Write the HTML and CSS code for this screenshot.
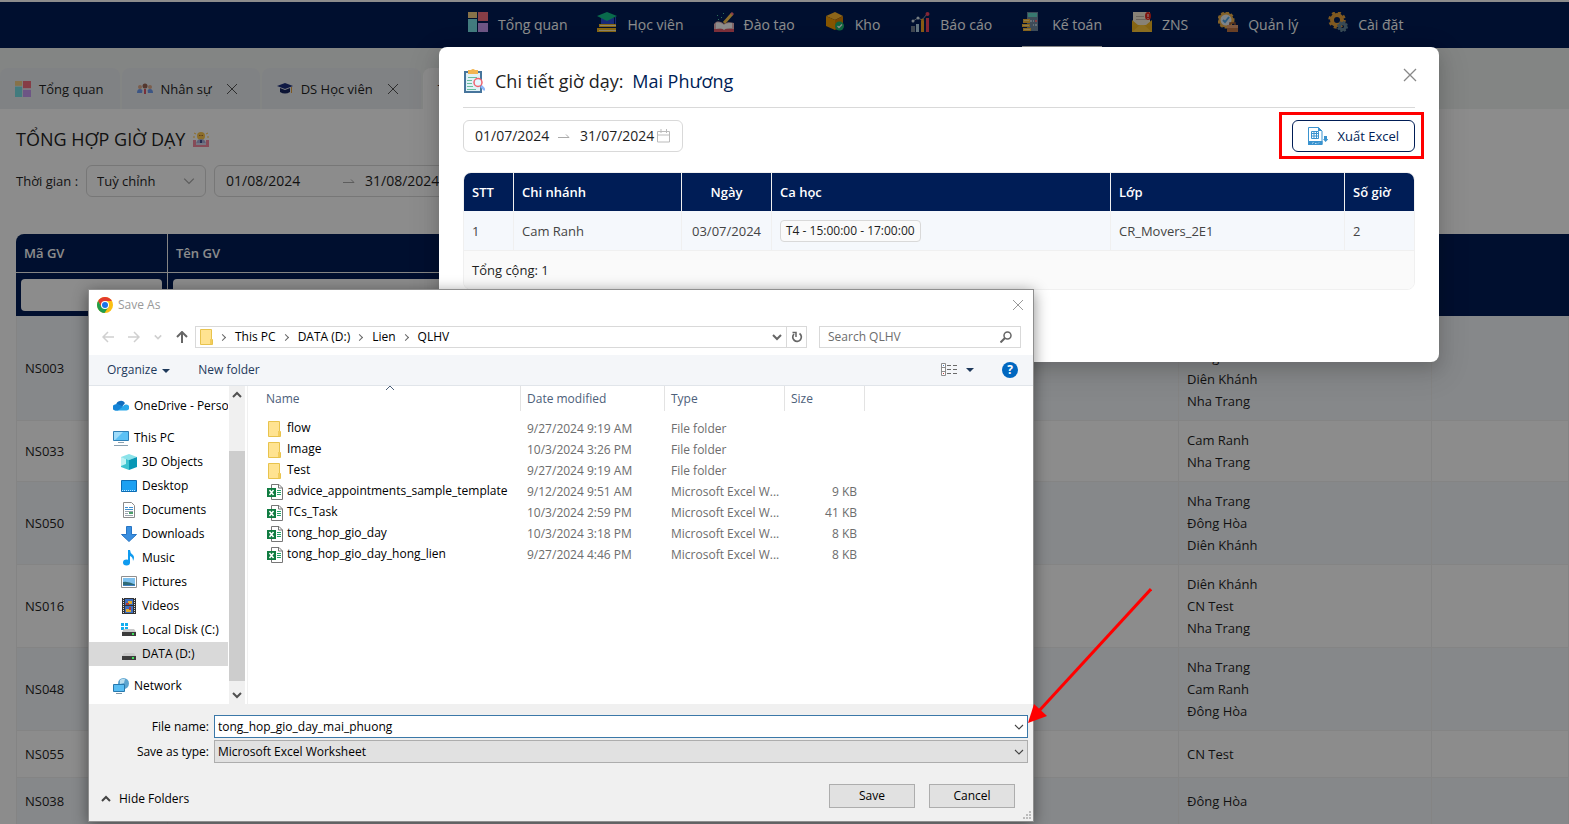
FILE: index.html
```html
<!DOCTYPE html>
<html lang="vi">
<head>
    <meta charset="UTF-8">
    <meta name="viewport" content="width=device-width, initial-scale=1.0">
    <title>Tổng hợp giờ dạy</title>
    <link rel="stylesheet" href="styles.css">
</head>
<body>
    <!-- Shared icons -->
    <svg class="sprite" aria-hidden="true">
        <symbol id="icon-grid" viewBox="0 0 20 20">
            <path fill="#f6cf86" d="M0 0h9v6H0z"/>
            <path fill="#f56f80" d="M10 0h10v9H10z"/>
            <path fill="#78e0e6" d="M0 7h9v13H0z"/>
            <path fill="#c79cf2" d="M10 11h10v9H10z"/>
        </symbol>
        <symbol id="icon-close" viewBox="0 0 12 12">
            <path d="M1 1l10 10M11 1L1 11" fill="none" stroke="currentColor"/>
        </symbol>
        <symbol id="icon-down" viewBox="0 0 10 10">
            <path d="M1 3l4 4 4-4" fill="none" stroke="currentColor" stroke-width="1.1"/>
        </symbol>
        <symbol id="icon-swap" viewBox="0 0 12 12">
            <path d="M0 7.5h11L8 4.5" fill="none" stroke="currentColor"/>
        </symbol>
        <symbol id="icon-folder" viewBox="0 0 16 16">
            <path fill="#ffe391" stroke="#e8c34d" d="M1.5.5h11v10h1v5H1.5z"/>
            <path fill="#f3cd5c" d="M11 10h2v5h-2z"/>
        </symbol>
        <symbol id="icon-excel" viewBox="0 0 16 16">
            <path fill="#fff" stroke="#777" d="M4.500.5h7.500l3.500 3.500v11.500H4.500z"/>
            <path fill="none" stroke="#777" d="M11.500.5V4h4"/>
            <path stroke="#21a366" d="M10 6.500h4M10 8.500h4M10 10.500h4"/>
            <path fill="#107c41" d="M0 4h9v9H0z"/>
            <path stroke="#fff" stroke-width="1.500" d="M2.500 6l4 5M6.500 6l-4 5"/>
        </symbol>
    </svg>

    <div class="app">
        <nav class="main-nav">
            <a href="#"><svg class="nav-icon"><use href="#icon-grid"/></svg>Tổng quan</a>
            <a href="#"><svg class="nav-icon" viewBox="0 0 20 20"><path fill="#2b4bd8" d="M4 6h13v6H4z"/><path fill="#12c48b" d="M0 4l10-4 10 4-10 5z"/><path stroke="#2b4bd8" d="M18.500 5v7"/><path fill="#f5b921" d="M2 12h17v3H2zM0 16h19v4H0z"/><path stroke="#fff0c0" d="M3 13.500h16M2 18.500h17"/></svg>Học viên</a>
            <a href="#"><svg class="nav-icon" viewBox="0 0 20 20"><path fill="#e9b7bb" d="M0 12l2-2c3-1 6 0 8 2 3-2 6-2 10-1v7H0z"/><path fill="#e4586b" d="M0 17h20v3H0z"/><path fill="#fff" d="M2 11c3-1 6 0 8 2 2-2 5-2 8-2v5c-3 0-6 0-8 2-2-2-5-2-8-1z"/><path stroke="#ffc850" stroke-width="3" d="M10 11l8-9"/><path stroke="#ff7784" stroke-width="3" d="M17.500 2.500L19 1"/><path fill="#50c8a0" d="M3 3h1v1H3zM7 5h1v1H7zM9 1h1v1H9zM4 7h1v1H4z"/></svg>Đào tạo</a>
            <a href="#"><svg class="nav-icon" viewBox="0 0 20 20"><path fill="#ffb82e" d="M1 4l9-4 8 4-8 4z"/><path fill="#f29c00" d="M1 4l9 4v10l-9-4z"/><path fill="#d98200" d="M10 8l8-4v10l-8 4z"/><circle cx="14.500" cy="14" r="4.500" fill="#1eb872"/><path fill="none" stroke="#fff" stroke-width="1.300" d="M12.500 14l1.500 1.500 3-3"/></svg>Kho</a>
            <a href="#"><svg class="nav-icon" viewBox="0 0 20 20"><path fill="#758194" d="M1 14h4v6H1z"/><path fill="#b5d4e8" d="M6 12h3v8H6z"/><path fill="#f6a623" d="M11 9h3v11h-3z"/><path fill="#f04461" d="M16 6h3v14h-3z"/><path fill="none" stroke="#8b98a8" d="M3 9l5-3 4 2 5-6"/><g fill="#d9e5ef"><circle cx="3" cy="9" r="1.500"/><circle cx="8" cy="6" r="1.500"/></g><circle cx="12.500" cy="8" r="1.500" fill="#f6a623"/><circle cx="17.500" cy="2" r="2" fill="#f04461"/></svg>Báo cáo</a>
            <a href="#" class="active"><svg class="nav-icon" viewBox="0 0 20 20"><path fill="#718aa3" d="M5 0h11v19H5z"/><path fill="#67dccc" d="M6 1h9v4H6z"/><path fill="#b7cddd" d="M8 8h2v2H8zM11 8h1v2h-1zM11 12h1v2h-1zM13 12h2v2h-2z"/><path fill="#ff7078" d="M13 8h2v2h-2z"/><path fill="#f8b635" d="M1 7h7v4H1zM0 12h8v3H0zM1 16h8v3H1z"/><path stroke="#ffe08a" d="M2 8.500h5M1 13.500h6M2 17.500h6"/></svg>Kế toán</a>
            <a href="#"><svg class="nav-icon" viewBox="0 0 20 20"><path fill="#f7edd8" d="M1 0h17v14H1z"/><path stroke="#c1b7a6" d="M4 4.500h8M4 7.500h10"/><path fill="#f5b824" d="M0 8l6 5h8l6-5v12H0z"/><path fill="#ffc93c" d="M0 20l8-7h4l8 7z"/><ellipse cx="16" cy="4" rx="3" ry="4" fill="#e8261c"/><path stroke="#fff" d="M16 2v3M16 6v1"/></svg>ZNS</a>
            <a href="#"><svg class="nav-icon" viewBox="0 0 20 20"><circle cx="8" cy="8" r="6.500" fill="#e6eef7" stroke="#efb149" stroke-width="2"/><circle cx="8" cy="8" r="7.500" fill="none" stroke="#efb149" stroke-width="2" stroke-dasharray="3 2"/><path fill="none" stroke="#4ba4ea" stroke-width="2" d="M5 8l2 2 4-5"/><path fill="#bf7546" d="M9 13h11v7H9z"/><path fill="none" stroke="#9a5a35" stroke-width="1.500" d="M12 13v-2h5v2"/><path fill="#e6a177" d="M9 13h11v3H9z"/></svg>Quản lý</a>
            <a href="#"><svg class="nav-icon" viewBox="0 0 20 20"><circle cx="9" cy="8" r="5" fill="none" stroke="#e9a33b" stroke-width="4"/><circle cx="9" cy="8" r="7.500" fill="none" stroke="#e9a33b" stroke-width="2.500" stroke-dasharray="3 3"/><circle cx="14.500" cy="14.500" r="3" fill="none" stroke="#66879b" stroke-width="3"/><circle cx="14.500" cy="14.500" r="4.500" fill="none" stroke="#66879b" stroke-width="2" stroke-dasharray="2 1.500"/></svg>Cài đặt</a>
        </nav>

        <div class="tabs">
            <div class="tab"><svg class="tab-icon"><use href="#icon-grid"/></svg><a href="#">Tổng quan</a></div>
            <div class="tab"><svg class="tab-icon" viewBox="0 0 16 16"><circle cx="3" cy="6" r="2" fill="#e0ab8c"/><circle cx="13" cy="6" r="2" fill="#e0ab8c"/><path fill="#6d9cf0" d="M0 12q0-4 3-4t3 4zM10 12q0-4 3-4t3 4z"/><circle cx="8" cy="5" r="2.500" fill="#9a6555"/><path fill="#e8edf5" d="M5 13q0-5 3-5t3 5z"/><path stroke="#d9263a" stroke-width="1.500" d="M8 8v5"/></svg><a href="#">Nhân sự</a><button class="tab-close" aria-label="Đóng Nhân sự"><svg><use href="#icon-close"/></svg></button></div>
            <div class="tab"><svg class="tab-icon" viewBox="0 0 16 16"><path fill="#1c2f7c" d="M0 5l8-3 8 3-8 3z"/><path fill="#16255f" d="M3 7l5 2 5-2v4q-5 3-10 0z"/><path stroke="#e8a13a" d="M14.500 6v6"/></svg><a href="#">DS Học viên</a><button class="tab-close" aria-label="Đóng DS Học viên"><svg><use href="#icon-close"/></svg></button></div>
            <div class="tab current"><a href="#">Tổng hợp giờ dạy</a></div>
        </div>

        <main class="content">
            <h1>TỔNG HỢP GIỜ DẠY
                <svg class="title-icon" viewBox="0 0 16 16"><circle cx="8" cy="5" r="4" fill="#ffc94d"/><path stroke="#ffc94d" d="M1 2l2 1M15 2l-2 1M0 6h2M14 6h2"/><path stroke="#a86b32" d="M6 4.500h1.500M8.500 4.500h1.500"/><path fill="#a9b1dc" d="M3 14q0-6 5-6t5 6z"/><path fill="#f58ba0" d="M0 9h3v5h10V9h3v7H0z"/><path fill="#d5d9ee" d="M3 12h10v2H3z"/><path fill="#44508f" d="M7 9h2v3H7z"/></svg>
            </h1>
            <div class="filters">
                <label for="period">Thời gian :</label>
                <span class="select-box">
                    <select id="period"><option>Tuỳ chỉnh</option></select>
                    <svg class="select-arrow"><use href="#icon-down"/></svg>
                </span>
                <span class="range range-wide">
                    <input type="text" value="01/08/2024" aria-label="Từ ngày">
                    <svg class="range-arrow"><use href="#icon-swap"/></svg>
                    <input type="text" value="31/08/2024" aria-label="Đến ngày">
                </span>
            </div>

            <table class="teachers">
                <colgroup><col class="col-code"><col><col class="col-branch"><col class="col-last"></colgroup>
                <thead>
                    <tr><th>Mã GV</th><th>Tên GV</th><th></th><th></th></tr>
                    <tr class="search-row">
                        <td><input type="text" aria-label="Tìm mã GV"></td>
                        <td><input type="text" aria-label="Tìm tên GV"></td>
                        <td></td>
                        <td></td>
                    </tr>
                </thead>
                <tbody>
                    <tr><td>NS003</td><td></td><td>Cam Ranh<br>Đông Hòa<br>Diên Khánh<br>Nha Trang</td><td></td></tr>
                    <tr><td>NS033</td><td></td><td>Cam Ranh<br>Nha Trang</td><td></td></tr>
                    <tr><td>NS050</td><td></td><td>Nha Trang<br>Đông Hòa<br>Diên Khánh</td><td></td></tr>
                    <tr><td>NS016</td><td></td><td>Diên Khánh<br>CN Test<br>Nha Trang</td><td></td></tr>
                    <tr><td>NS048</td><td></td><td>Nha Trang<br>Cam Ranh<br>Đông Hòa</td><td></td></tr>
                    <tr><td>NS055</td><td></td><td>CN Test</td><td></td></tr>
                    <tr><td>NS038</td><td></td><td>Đông Hòa</td><td></td></tr>
                </tbody>
            </table>
        </main>
    </div>

    <div class="mask"></div>

    <!-- Teaching hours detail -->
    <section class="modal" role="dialog" aria-labelledby="modalTitle">
        <header class="modal-header">
            <svg class="modal-icon" viewBox="0 0 22 24"><path fill="#dff1f7" stroke="#47759c" stroke-width="2" d="M2 3h16v20H2z"/><path fill="#f2b450" d="M5 1h3q2-2 4 0h3v4H5z"/><path stroke="#69bd9b" d="M5 8.500h9M4 11.500h5M4 14.500h5M4 17.500h6M4 20.500h9"/><circle cx="15" cy="13.500" r="4" fill="#e7f6ff" stroke="#f0616d" stroke-width="1.500"/><path stroke="#8bb5f8" stroke-width="2.500" d="M18 17l4 4"/></svg>
            <h2 id="modalTitle">Chi tiết giờ dạy: <span>Mai Phương</span></h2>
            <button class="modal-close" aria-label="Đóng"><svg viewBox="0 0 14 14"><path d="M1 1l12 12M13 1L1 13" fill="none" stroke="currentColor" stroke-width="1.300"/></svg></button>
        </header>
        <div class="modal-tools">
            <span class="range">
                <input type="text" value="01/07/2024" aria-label="Từ ngày">
                <svg class="range-arrow"><use href="#icon-swap"/></svg>
                <input type="text" value="31/07/2024" aria-label="Đến ngày">
                <svg class="calendar" viewBox="0 0 14 14"><path fill="none" stroke="currentColor" d="M.5 2.500h12v10.500H.5zM.5 6h12M4 0v4M9.500 0v4"/></svg>
            </span>
            <div class="export-mark">
                <button class="export">
                    <svg viewBox="0 0 20 20"><path fill="#fff" stroke="#3a93cf" d="M.5 1.500h10l3.500 3.500v13H.5z"/><path fill="#3a93cf" d="M10 1l4 4h-4zM0 15h14.500v4H0z"/><path fill="none" stroke="#3a93cf" d="M3.500 5.500h7v7h-7zM3.500 7.500h7M3.500 10h7M6 5.500v7M8.500 5.500v7"/><path stroke="#b9dcf2" d="M4 17.500l1.500-1M7 17.500h1.500M10 17.500l1-1"/><path fill="#3a93cf" d="M16 10h3v3h1.500l-3 3-2.500-3h1z"/></svg>
                    Xuất Excel
                </button>
            </div>
        </div>
        <div class="detail-box">
            <table class="detail">
                <colgroup><col class="col-stt"><col class="col-place"><col class="col-date"><col><col class="col-class"><col class="col-hours"></colgroup>
                <thead>
                    <tr><th>STT</th><th>Chi nhánh</th><th class="center">Ngày</th><th>Ca học</th><th>Lớp</th><th>Số giờ</th></tr>
                </thead>
                <tbody>
                    <tr><td>1</td><td>Cam Ranh</td><td class="center">03/07/2024</td><td><span class="tag">T4 - 15:00:00 - 17:00:00</span></td><td>CR_Movers_2E1</td><td>2</td></tr>
                </tbody>
            </table>
            <div class="total">Tổng cộng: 1</div>
        </div>
    </section>

    <!-- Save As window -->
    <section class="save-window" role="dialog" aria-label="Save As" lang="en">
        <header class="window-title">
            <svg class="icon16" viewBox="0 0 16 16"><circle cx="8" cy="8" r="8" fill="#fbbf12"/><path fill="#e33b2e" d="M1.100 4A8 8 0 0 1 14.900 4H8L4.500 10z"/><path fill="#1f9d4d" d="M1.100 4A8 8 0 0 0 7.500 16l4-6H4.500z"/><circle cx="8" cy="8" r="4" fill="#fff"/><circle cx="8" cy="8" r="3" fill="#1a73e8"/></svg>
            <span>Save As</span>
            <button aria-label="Close"><svg class="icon12"><use href="#icon-close"/></svg></button>
        </header>

        <div class="address-row">
            <div class="arrows">
                <button class="faded" aria-label="Back"><svg class="icon12" viewBox="0 0 12 12"><path d="M12 6H1M6 1L1 6l5 5" fill="none" stroke="currentColor" stroke-width="1.500"/></svg></button>
                <button class="faded" aria-label="Forward"><svg class="icon12" viewBox="0 0 12 12"><path d="M0 6h11M6 1l5 5-5 5" fill="none" stroke="currentColor" stroke-width="1.500"/></svg></button>
                <button class="faded" aria-label="Recent locations"><svg class="icon8" viewBox="0 0 10 10"><path d="M1 3l4 4 4-4" fill="none" stroke="currentColor" stroke-width="2"/></svg></button>
                <button aria-label="Up"><svg class="icon12" viewBox="0 0 12 12"><path d="M6 12V1M1 6l5-5 5 5" fill="none" stroke="currentColor" stroke-width="2"/></svg></button>
            </div>
            <div class="address">
                <svg class="icon16"><use href="#icon-folder"/></svg>
                <span class="sep"></span><a href="#">This PC</a>
                <span class="sep"></span><a href="#">DATA (D:)</a>
                <span class="sep"></span><a href="#">Lien</a>
                <span class="sep"></span><a href="#">QLHV</a>
                <button class="address-drop" aria-label="Previous locations"><svg class="icon10" viewBox="0 0 10 10"><path d="M1 3l4 4 4-4" fill="none" stroke="currentColor" stroke-width="2"/></svg></button>
                <button class="refresh" aria-label="Refresh"><svg class="icon12" viewBox="0 0 12 12"><path d="M8.500 2.500a4.300 4.300 0 1 1-5.500.5" fill="none" stroke="currentColor" stroke-width="1.700"/><path fill="none" stroke="currentColor" stroke-width="1.500" d="M1.500 1.500H5V6"/></svg></button>
            </div>
            <div class="search">
                <input type="text" placeholder="Search QLHV" aria-label="Search QLHV">
                <svg class="icon12" viewBox="0 0 12 12"><circle cx="7.500" cy="4.500" r="3.500" fill="none" stroke="currentColor" stroke-width="1.500"/><path d="M5 7l-4.500 4.500" stroke="currentColor" stroke-width="2"/></svg>
            </div>
        </div>

        <div class="toolbar">
            <button>Organize <i class="caret"></i></button>
            <button>New folder</button>
            <button class="view" aria-label="Change your view">
                <svg class="icon16" viewBox="0 0 16 14"><path fill="#fff" stroke="#8c8c8c" d="M.5.5h4v12h-4zM.5 4.500h4M.5 8.500h4"/><path stroke="#6a6a6a" stroke-dasharray="4 2" d="M6 2.500h10M6 6.500h10M6 10.500h10"/><path fill="#4a7dc0" d="M2 2h1v1H2z"/><path fill="#c04040" d="M2 10h1v1H2z"/></svg>
                <i class="caret"></i>
            </button>
            <button class="help" aria-label="Help">?</button>
        </div>

        <div class="explorer">
            <div class="tree">
                <ul>
                    <li><a href="#"><svg class="icon16" viewBox="0 0 16 16"><path fill="#0f6cbd" d="M3 7a5 5 0 0 1 9-2l-4 5z"/><path fill="#28a8ea" d="M2.500 12.500a3 3 0 0 1 .5-6q2-.5 4 1l3 1a3 3 0 0 1 3-2 3 3 0 0 1 .5 6z"/><path fill="#1484d7" d="M2.500 12.500a3 3 0 0 1 .5-6q2-.5 4 1l3 1-5 4z"/></svg>OneDrive - Person</a></li>
                    <li class="root"><a href="#"><svg class="icon16" viewBox="0 0 16 16"><path fill="#5cc1f5" stroke="#2f7fb5" d="M.5 1.500h15v9H.5z"/><path fill="#9edcfb" d="M1 2h9l-8 8H1z"/><path stroke="#8aa0b0" d="M5 12.500h6M1 15.500h14"/></svg>This PC</a>
                        <ul>
                            <li><a href="#"><svg class="icon16" viewBox="0 0 16 16"><path fill="#8be3ea" d="M0 3l8-3 8 3-8 3z"/><path fill="#3cc3d0" d="M0 3l8 3v10l-8-3z"/><path fill="#0897b5" d="M16 3L8 6v10l8-3z"/><path fill="#bdf3f5" d="M0 3l5 2v5l-5 2z"/></svg>3D Objects</a></li>
                            <li><a href="#"><svg class="icon16" viewBox="0 0 16 16"><path fill="#1ba0f2" stroke="#0c6cb3" d="M.5 2.500h15v11H.5z"/><path stroke="#bfe5ff" stroke-dasharray="1 1" d="M1 12.500h14"/></svg>Desktop</a></li>
                            <li><a href="#"><svg class="icon16" viewBox="0 0 16 16"><path fill="#fff" stroke="#8a8a8a" d="M2.500.5h8l3 3v12h-11z"/><path stroke="#3f8fd0" d="M4 5.500h3M8 5.500h4M4 7.500h8"/><path stroke="#9aa4ae" d="M4 9.500h8M4 11.500h3M4 13.500h8"/><path fill="#4ca06a" d="M8 10h4v2H8z"/></svg>Documents</a></li>
                            <li><a href="#"><svg class="icon16" viewBox="0 0 16 16"><path fill="#3a8fe0" stroke="#2775c4" d="M5.500.5h5v8h5L8 15.500.5 8.500h5z"/></svg>Downloads</a></li>
                            <li><a href="#"><svg class="icon16" viewBox="0 0 16 16"><ellipse cx="5.500" cy="12.500" rx="3.500" ry="3" fill="#0f9bf0"/><path fill="#0f9bf0" d="M7 0h2q0 3 3 5 2 2 0 6 0-4-3-5v7H7z"/></svg>Music</a></li>
                            <li><a href="#"><svg class="icon16" viewBox="0 0 16 16"><path fill="#fff" stroke="#8f8f8f" d="M.5 2.500h15v11H.5z"/><path fill="#7fc1ee" d="M2 4h12v8H2z"/><path fill="#2f6a77" d="M2 8q5-1 12 2.500v1H2z"/><path fill="#3f7fc0" d="M2 11h12v1H2z"/></svg>Pictures</a></li>
                            <li><a href="#"><svg class="icon16" viewBox="0 0 16 16"><path fill="#333" d="M1 0h14v16H1z"/><path stroke="#ddd" stroke-dasharray="1 1" d="M2.500 0v16M13.500 0v16"/><path fill="#3e6fc2" d="M4 1h8v6H4zM4 8h8v7H4z"/><path fill="#e0a92c" d="M7 3h4v3H7zM5 11h5v3H5z"/><path fill="#b23a30" d="M5 5h3v2H5zM8 9h2v3H8z"/></svg>Videos</a></li>
                            <li><a href="#"><svg class="icon16" viewBox="0 0 16 16"><path fill="#12aef0" d="M0 1h3v3H0zM4 1h3v3H4zM0 5h3v3H0zM4 5h3v3H4z"/><path fill="#c9c9c9" d="M3 7h10l2 3H1z"/><path fill="#3c3c3c" d="M1 10h14v4H1z"/><path fill="#3fe05a" d="M11 11h2v2h-2z"/></svg>Local Disk (C:)</a></li>
                            <li class="selected"><a href="#"><svg class="icon16" viewBox="0 0 16 16"><path fill="#c9c9c9" d="M3 7h10l2 3H1z"/><path fill="#3c3c3c" d="M1 10h14v4H1z"/><path fill="#3fe05a" d="M11 11h2v2h-2z"/></svg>DATA (D:)</a></li>
                        </ul>
                    </li>
                    <li class="root"><a href="#"><svg class="icon16" viewBox="0 0 16 16"><circle cx="10.500" cy="5.500" r="5.500" fill="#5ba3cf"/><path fill="#b9dced" d="M7 2q3-2 5-1l-1 4-4 1z"/><path fill="#58bdf3" stroke="#2878ad" d="M.5 6.500h11v7H.5z"/><path stroke="#7f98a8" d="M3 15.500h6"/></svg>Network</a></li>
                </ul>
            </div>
            <div class="scrollbar">
                <svg class="icon10" viewBox="0 0 10 10"><path d="M1 7l4-4 4 4" fill="none" stroke="currentColor" stroke-width="2"/></svg>
                <span class="thumb"></span>
                <svg class="icon10" viewBox="0 0 10 10"><path d="M1 3l4 4 4-4" fill="none" stroke="currentColor" stroke-width="2"/></svg>
            </div>
            <div class="files-pane">
                <table class="files">
                    <colgroup><col class="col-name"><col class="col-modified"><col class="col-type"><col class="col-size"><col></colgroup>
                    <thead>
                        <tr><th>Name<svg class="sort icon10" viewBox="0 0 10 10"><path d="M1 7l4-4 4 4" fill="none" stroke="currentColor"/></svg></th><th>Date modified</th><th>Type</th><th>Size</th><th></th></tr>
                    </thead>
                    <tbody>
                        <tr><td><svg class="icon16"><use href="#icon-folder"/></svg>flow</td><td>9/27/2024 9:19 AM</td><td>File folder</td><td></td><td></td></tr>
                        <tr><td><svg class="icon16"><use href="#icon-folder"/></svg>Image</td><td>10/3/2024 3:26 PM</td><td>File folder</td><td></td><td></td></tr>
                        <tr><td><svg class="icon16"><use href="#icon-folder"/></svg>Test</td><td>9/27/2024 9:19 AM</td><td>File folder</td><td></td><td></td></tr>
                        <tr><td><svg class="icon16"><use href="#icon-excel"/></svg>advice_appointments_sample_template</td><td>9/12/2024 9:51 AM</td><td>Microsoft Excel W...</td><td>9 KB</td><td></td></tr>
                        <tr><td><svg class="icon16"><use href="#icon-excel"/></svg>TCs_Task</td><td>10/3/2024 2:59 PM</td><td>Microsoft Excel W...</td><td>41 KB</td><td></td></tr>
                        <tr><td><svg class="icon16"><use href="#icon-excel"/></svg>tong_hop_gio_day</td><td>10/3/2024 3:18 PM</td><td>Microsoft Excel W...</td><td>8 KB</td><td></td></tr>
                        <tr><td><svg class="icon16"><use href="#icon-excel"/></svg>tong_hop_gio_day_hong_lien</td><td>9/27/2024 4:46 PM</td><td>Microsoft Excel W...</td><td>8 KB</td><td></td></tr>
                    </tbody>
                </table>
            </div>
        </div>

        <form class="save-form">
            <div class="fields">
                <label for="fileName">File name:</label>
                <span class="field"><input type="text" id="fileName" value="tong_hop_gio_day_mai_phuong"><svg class="icon10"><use href="#icon-down"/></svg></span>
                <label for="fileType">Save as type:</label>
                <span class="field"><select id="fileType"><option>Microsoft Excel Worksheet</option></select><svg class="icon10"><use href="#icon-down"/></svg></span>
            </div>
            <div class="actions">
                <button type="button" class="hide-folders"><svg class="icon10" viewBox="0 0 10 10"><path d="M1 7l4-4 4 4" fill="none" stroke="#444" stroke-width="2"/></svg>Hide Folders</button>
                <button type="button" class="win-button">Save</button>
                <button type="button" class="win-button">Cancel</button>
            </div>
            <svg class="grip" viewBox="0 0 8 8"><path fill="#bcbcbc" d="M6 0h2v2H6zM3 3h2v2H3zM6 3h2v2H6zM0 6h2v2H0zM3 6h2v2H3zM6 6h2v2H6z"/></svg>
        </form>
    </section>

    <svg class="pointer" viewBox="0 0 124 136" aria-hidden="true">
        <path stroke="#f00" stroke-width="3" d="M123 1L10 124"/>
        <path fill="#f00" d="M0 135l6-19 13 12z"/>
    </svg>
</body>
</html>
```

FILE: styles.css
```css
* {
    box-sizing: border-box;
}
body {
    position: relative;
    min-height: 100vh;
    margin: 0;
    overflow-x: hidden;
    background: #fff;
    color: #1f1f1f;
    font-family: "Open Sans", "Noto Sans", sans-serif;
    font-size: 13px;
    line-height: 22px;
}
a {
    color: inherit;
    text-decoration: none;
}
button, input, select {
    margin: 0;
    padding: 0;
    border: none;
    background: none;
    color: inherit;
    font: inherit;
    outline: none;
}
select {
    appearance: none;
}
svg {
    flex: none;
}
ul {
    margin: 0;
    padding: 0;
    list-style: none;
}
table {
    width: 100%;
    border-collapse: separate;
    border-spacing: 0;
    table-layout: fixed;
}
.sprite {
    position: absolute;
    width: 0;
    height: 0;
}

/* Navigation */
.app {
    height: 100vh;
    overflow: hidden;
}
.main-nav {
    display: flex;
    gap: 30px;
    height: 46px;
    margin-top: 2px;
    padding-left: 468px;
    background: #001d56;
    color: #fff;
    font-size: 14px;
    white-space: nowrap;
}
.main-nav a {
    display: flex;
    align-items: center;
    gap: 10px;
    padding-top: 2px;
    border-bottom: 2px solid transparent;
}
.main-nav a.active {
    border-bottom-color: #fff;
}
.nav-icon {
    width: 20px;
    height: 20px;
    margin-bottom: 6px;
}
.tabs {
    display: flex;
    gap: 2px;
    height: 61px;
    padding-top: 20px;
    background: #eff2f0;
    white-space: nowrap;
}
.tab {
    display: flex;
    align-items: center;
    padding: 0 16px 0 15px;
    background: #eaedf1;
    border-radius: 8px 8px 0 0;
    color: #1f1f1f;
}
.tab.current {
    background: #fff;
}
.tab-icon {
    width: 16px;
    height: 16px;
    margin-right: 8px;
}
.tab-close {
    width: 12px;
    height: 12px;
    margin: 0 6px 0 14px;
    color: #555;
    line-height: 0;
}
.tab-close svg {
    width: 12px;
    height: 12px;
}

/* Page content */
.content {
    padding: 16px 0 0 16px;
}
h1 {
    display: flex;
    align-items: center;
    gap: 8px;
    margin: 0 0 12px;
    font-size: 18px;
    font-weight: 500;
    line-height: 28px;
}
.title-icon {
    width: 16px;
    height: 16px;
}
.filters {
    display: flex;
    align-items: center;
    gap: 8px;
    margin-bottom: 37px;
}
.select-box {
    display: flex;
    align-items: center;
    width: 120px;
    height: 32px;
    padding: 0 10px;
    border: 1px solid #d9d9d9;
    border-radius: 6px;
}
.select-box select {
    flex: 1;
    min-width: 0;
}
.select-arrow {
    width: 12px;
    height: 12px;
    color: #aaa;
}
.range {
    display: flex;
    align-items: center;
    width: 220px;
    height: 32px;
    padding: 0 11px;
    border: 1px solid #d9d9d9;
    border-radius: 6px;
}
.range input {
    width: 77px;
    font-size: 14px;
}
.range input:first-child {
    width: 83px;
}
.range-wide {
    width: 290px;
}
.range-wide input:first-child {
    width: 117px;
}
.range-arrow {
    width: 12px;
    height: 12px;
    margin-right: 10px;
    color: #aaa;
}
.calendar {
    width: 14px;
    height: 14px;
    color: #bbb;
}
.col-code {
    width: 152px;
}
.col-branch {
    width: 253px;
}
.col-last {
    width: 137px;
}
.teachers th {
    height: 39px;
    padding: 0 8px;
    border-right: 1px solid #f0f0f0;
    border-bottom: 1px solid #f0f0f0;
    background: #001d56;
    color: #fff;
    font-weight: 600;
    text-align: left;
}
.teachers th:first-child {
    border-top-left-radius: 8px;
}
.teachers .search-row td {
    height: 43px;
    padding: 5px;
    border-right: 1px solid #f0f0f0;
    background: #001d56;
}
/* No rules between the header cells on the right */
.teachers th:nth-child(n+3), .teachers .search-row td:nth-child(n+3) {
    border-color: #001d56;
}
.search-row input {
    display: block;
    width: 100%;
    height: 32px;
    padding: 0 8px;
    border-radius: 4px;
    background: #fff;
}
.teachers tbody td {
    height: 47px;
    padding: 8px;
    border-right: 1px solid #f0f0f0;
    border-bottom: 1px solid #f0f0f0;
}
.teachers tbody td:first-child {
    border-left: 1px solid #f0f0f0;
}
.teachers tbody tr:nth-child(odd) {
    background: #f5f8fc;
}
.mask {
    position: absolute;
    inset: 0;
    background: rgba(0, 0, 0, 0.45);
}

/* Detail modal */
.modal {
    position: absolute;
    top: 47px;
    left: 439px;
    width: 1000px;
    min-height: 315px;
    padding: 20px 24px;
    border-radius: 8px;
    background: #fff;
    box-shadow: 0 6px 16px rgba(0, 0, 0, 0.15), 0 9px 28px 8px rgba(0, 0, 0, 0.08);
}
.modal-header {
    display: flex;
    align-items: center;
    gap: 10px;
    height: 41px;
    padding-bottom: 12px;
    border-bottom: 1px solid #d9d9d9;
}
.modal-icon {
    width: 22px;
    height: 24px;
}
h2 {
    flex: 1;
    margin: 0;
    font-size: 18px;
    font-weight: 500;
    line-height: 28px;
}
h2 span {
    margin-left: 4px;
    color: #001d56;
}
.modal-close {
    height: 28px;
    margin-right: -2px;
    padding-bottom: 12px;
    color: #888;
    line-height: 0;
}
.modal-close svg {
    width: 14px;
    height: 14px;
}
.modal-tools {
    display: flex;
    align-items: center;
    justify-content: space-between;
    margin: 4px 0 13px;
}
.export-mark {
    margin-right: -9px;
    padding: 5px 6px 4px 10px;
    border: 3px solid #f00;
}
.export {
    display: flex;
    align-items: center;
    gap: 9px;
    height: 32px;
    padding: 0 15px;
    border: 1px solid #001d56;
    border-radius: 6px;
    color: #001d56;
}
.export svg {
    width: 20px;
    height: 20px;
}
.detail-box {
    overflow: hidden;
    border: 1px solid #f0f0f0;
    border-radius: 8px;
}
.col-stt {
    width: 50px;
}
.col-place {
    width: 168px;
}
.col-date {
    width: 90px;
}
.col-class {
    width: 234px;
}
.col-hours {
    width: 69px;
}
.detail th, .detail td {
    height: 40px;
    padding: 0 8px;
    border-right: 1px solid #f0f0f0;
    text-align: left;
}
.detail th {
    height: 38px;
    background: #001d56;
    color: #fff;
    font-weight: 600;
}
.detail td {
    background: #f5f8fc;
    border-bottom: 1px solid #f0f0f0;
    color: #444;
}
.detail th:last-child, .detail td:last-child {
    border-right: none;
}
.detail .center {
    text-align: center;
}
.tag {
    display: inline-block;
    padding: 0 5px;
    border: 1px solid #d9d9d9;
    border-radius: 4px;
    background: #fafafa;
    color: #1f1f1f;
    font-size: 12px;
    line-height: 20px;
}
.total {
    padding: 8px;
    background: #fafafa;
}

/* Save As window */
.save-window {
    position: absolute;
    top: 289px;
    left: 88px;
    width: 946px;
    border: 1px solid #8f8f8f;
    background: #fff;
    box-shadow: 0 3px 14px rgba(0, 0, 0, 0.45);
    color: #000;
    font-size: 12px;
    line-height: 16px;
    white-space: nowrap;
}
.icon16 {
    width: 16px;
    height: 16px;
}
.icon12 {
    width: 12px;
    height: 12px;
}
.icon10 {
    width: 10px;
    height: 10px;
}
.icon8 {
    width: 8px;
    height: 8px;
}
.window-title {
    display: flex;
    align-items: center;
    gap: 5px;
    height: 29px;
    padding: 0 9px 0 8px;
    color: #999;
}
.window-title button {
    margin-left: auto;
    line-height: 0;
}
.address-row {
    display: flex;
    align-items: center;
    height: 36px;
    padding: 0 12px 0 13px;
}
.arrows {
    display: flex;
    align-items: center;
    justify-content: space-between;
    width: 86px;
    margin-right: 7px;
    color: #666;
}
.arrows button {
    line-height: 0;
}
.arrows .faded {
    color: #d0d0d0;
}
.address {
    display: flex;
    flex: 1;
    align-items: center;
    height: 22px;
    padding-left: 3px;
    border: 1px solid #d9d9d9;
}
.sep {
    width: 5px;
    height: 5px;
    margin: 0 10px 0 5px;
    border: solid #666;
    border-width: 1px 1px 0 0;
    transform: rotate(45deg);
}
.address a + .sep {
    margin-left: 7px;
}
.address-drop {
    margin: 0 4px 0 auto;
    color: #666;
    line-height: 0;
}
.refresh {
    width: 20px;
    height: 20px;
    border-left: 1px solid #d9d9d9;
    color: #666;
    line-height: 0;
}
.search {
    display: flex;
    align-items: center;
    width: 202px;
    height: 22px;
    margin-left: 12px;
    padding: 0 8px;
    border: 1px solid #d9d9d9;
    color: #666;
}
.search input {
    flex: 1;
    min-width: 0;
}
.search input::placeholder {
    color: #6d6d6d;
}
.toolbar {
    display: flex;
    align-items: center;
    gap: 28px;
    height: 31px;
    padding: 0 15px 0 18px;
    border-bottom: 1px solid #e1e5ea;
    background: #f4f6f9;
    color: #1e395b;
}
.caret {
    display: inline-block;
    margin-left: 2px;
    border: 4px solid transparent;
    border-top-color: #1e395b;
    border-bottom: none;
    vertical-align: middle;
}
.view {
    display: flex;
    align-items: center;
    gap: 7px;
    margin-left: auto;
}
.help {
    width: 16px;
    height: 16px;
    border-radius: 50%;
    background: #0067c0;
    color: #fff;
    font-weight: 700;
}
.explorer {
    display: flex;
    height: 318px;
}
.tree {
    width: 139px;
    padding-top: 8px;
    overflow: hidden;
}
.tree a {
    display: flex;
    align-items: center;
    gap: 5px;
    height: 24px;
    padding-left: 24px;
}
.tree ul ul a {
    padding-left: 32px;
}
.tree .root {
    margin-top: 8px;
}
.tree .selected {
    background: #d9d9d9;
}
.scrollbar {
    display: flex;
    flex-direction: column;
    align-items: center;
    width: 17px;
    padding: 4px 0;
    border-left: 1px solid #fff;
    background: #f0f0f0;
    color: #505050;
}
.thumb {
    width: 16px;
    height: 230px;
    margin: auto 0 9px;
    background: #cdcdcd;
}
.files-pane {
    flex: 1;
    margin-left: 2px;
    border-left: 1px solid #f0f0f0;
}
.col-name {
    width: 273px;
}
.col-modified {
    width: 144px;
}
.col-type {
    width: 120px;
}
.col-size {
    width: 80px;
}
.files th {
    position: relative;
    height: 25px;
    padding: 0 6px;
    border-right: 1px solid #e3e3e3;
    color: #4c607a;
    font-weight: 400;
    text-align: left;
}
.files th:first-child {
    padding-left: 18px;
}
.files th:last-child {
    border-right: none;
}
.sort {
    position: absolute;
    top: -3px;
    left: 137px;
}
.files tbody::before {
    display: block;
    height: 7px;
    content: "";
}
.files td {
    height: 21px;
    padding: 0 6px;
    color: #6d6d6d;
}
.files td:first-child {
    padding-left: 19px;
    color: #000;
}
.files td svg {
    margin-right: 4px;
    vertical-align: middle;
}
.files td:nth-child(4) {
    padding-right: 8px;
    text-align: right;
}
.save-form {
    position: relative;
    padding: 11px 5px 13px 12px;
    background: #f0f0f0;
}
.fields {
    display: grid;
    grid-template-columns: 108px 1fr;
    gap: 2px 5px;
    align-items: center;
}
.fields label {
    text-align: right;
}
.field {
    display: flex;
    align-items: center;
    height: 23px;
    padding: 0 3px;
    border: 1px solid #adadad;
    background: #e1e1e1;
    color: #000;
}
.field input, .field select {
    flex: 1;
    min-width: 0;
}
.field svg {
    color: #444;
}
.field:has(input) {
    border-color: #3b78a8;
    background: #fff;
}
.actions {
    display: flex;
    align-items: center;
    gap: 14px;
    margin-top: 21px;
    padding-right: 13px;
}
.hide-folders {
    display: flex;
    align-items: center;
    gap: 8px;
    margin: 6px auto 0 0;
}
.win-button {
    width: 86px;
    height: 24px;
    border: 1px solid #adadad;
    background: #e1e1e1;
}
.grip {
    position: absolute;
    right: 2px;
    bottom: 2px;
    width: 8px;
    height: 8px;
}

/* Arrow to the file name */
.pointer {
    position: absolute;
    top: 588px;
    left: 1028px;
    width: 124px;
    height: 136px;
}
```
